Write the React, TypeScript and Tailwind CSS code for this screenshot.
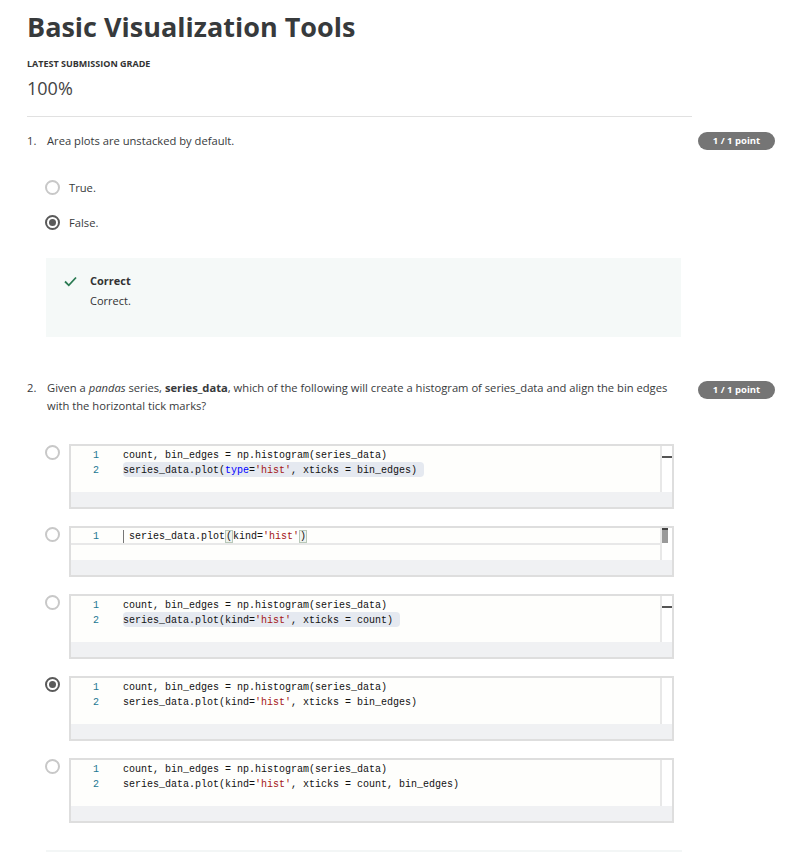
import React from "react";

const sans = { fontFamily: '"Open Sans", "Noto Sans", sans-serif' };
const mono = { fontFamily: '"Liberation Mono", "DejaVu Sans Mono", monospace' };

function Badge() {
  return (
    <div className="flex h-[18px] w-[77px] items-center justify-center rounded-full bg-[#757575] text-[9.5px] font-bold text-white">
      1 / 1 point
    </div>
  );
}

function Radio({ checked }: { checked?: boolean }) {
  return (
    <div
      className={
        "flex h-[15px] w-[15px] shrink-0 items-center justify-center rounded-full border-2 " +
        (checked ? "border-[#5a5a5a]" : "border-[#c8c8c8]")
      }
    >
      {checked && <div className="h-[7px] w-[7px] rounded-full bg-[#5a5a5a]" />}
    </div>
  );
}

type Tok = { t: string; c?: string };
type Line = { toks: Tok[]; hl?: number };

const S = (t: string): Tok => ({ t });
const R = (t: string): Tok => ({ t, c: "text-[#a31515]" });
const B = (t: string): Tok => ({ t, c: "text-[#0000ff]" });

const first: Line = { toks: [S("count, bin_edges = np.histogram(series_data)")] };

const options: { lines: Line[]; checked?: boolean; thumb?: "line" | "block" }[] = [
  {
    thumb: "line",
    lines: [first, { hl: 301, toks: [S("series_data.plot("), B("type"), S("="), R("'hist'"), S(", xticks = bin_edges)")] }],
  },
  { thumb: "block", lines: [] },
  {
    thumb: "line",
    lines: [first, { hl: 277, toks: [S("series_data.plot(kind="), R("'hist'"), S(", xticks = count)")] }],
  },
  {
    checked: true,
    lines: [first, { toks: [S("series_data.plot(kind="), R("'hist'"), S(", xticks = bin_edges)")] }],
  },
  {
    lines: [first, { toks: [S("series_data.plot(kind="), R("'hist'"), S(", xticks = count, bin_edges)")] }],
  },
];

function CodeBox({ lines, thumb, single }: { lines: Line[]; thumb?: "line" | "block"; single?: boolean }) {
  return (
    <div className="w-[605px] border-2 border-[#dedede] bg-[#f0f1f3]">
      <div className={"flex bg-[#fefefc] " + (single ? "h-[32px]" : "h-[46px]")}>
        <div className="flex-1 pt-[2px] text-[10px] text-[#111]" style={mono}>
          {single ? (
            <div className="flex h-[15px] items-center border-b-2 border-[#e8e8e8]">
              <span className="w-[28px] text-right text-[#237893]">1</span>
              <span className="ml-[24px] h-[13px] w-px bg-[#777]" />
              <span className="ml-[5px] whitespace-pre">
                series_data.plot
                <span className="border border-[#b8c8b8] bg-[#eef2ee]">(</span>
                kind=<span className="text-[#a31515]">'hist'</span>
                <span className="border border-[#b8c8b8] bg-[#eef2ee]">)</span>
              </span>
            </div>
          ) : (
            lines.map((ln, i) => (
              <div key={i} className="flex h-[15px] items-center">
                <span className="w-[28px] text-right text-[#237893]">{i + 1}</span>
                <span className="relative ml-[24px] whitespace-pre">
                  {ln.hl && (
                    <span
                      className="absolute left-0 top-[-1px] h-[15px] rounded-sm bg-[#e5e9f0]"
                      style={{ width: ln.hl }}
                    />
                  )}
                  <span className="relative">
                    {ln.toks.map((tk, j) => (
                      <span key={j} className={tk.c}>
                        {tk.t}
                      </span>
                    ))}
                  </span>
                </span>
              </div>
            ))
          )}
        </div>
        <div className="w-[12px] border-l-2 border-[#e8e8e8] bg-white">
          {thumb === "line" && <div className="mt-[10px] h-[2px] w-full bg-[#555]" />}
          {thumb === "block" && (
            <div className="h-[15px] w-[6px] border-t-2 border-[#444] bg-[#9a9a9a]" />
          )}
        </div>
      </div>
      <div className="h-[15px]" />
    </div>
  );
}

export default function App() {
  return (
    <div className="min-h-screen bg-white pl-[27px] text-[#373a3c]" style={sans}>
      <h1 className="pt-[9px] text-[27px] font-bold leading-[36px] text-[#373a3c]">
        Basic Visualization Tools
      </h1>
      <div className="mt-[13px] text-[9px] font-bold leading-[12px] text-[#333]">
        LATEST SUBMISSION GRADE
      </div>
      <div className="mt-[6px] text-[18px] font-normal leading-[24px] text-[#444]">100%</div>
      <div className="mt-[16px] h-px w-[665px] bg-[#e1e1e1]" />

      {/* question 1 */}
      <div className="mt-[15px] flex">
        <div className="flex w-[664px]">
          <span className="w-[20px] text-[11.2px] leading-[18px]">1.</span>
          <div className="flex-1">
            <p className="text-[11.2px] leading-[18px]">Area plots are unstacked by default.</p>
            <div className="mt-[30px] flex flex-col gap-[20px]">
              <label className="-ml-[2px] flex items-center gap-[9px] text-[11.2px] leading-[15px]">
                <Radio />
                True.
              </label>
              <label className="-ml-[2px] flex items-center gap-[9px] text-[11.2px] leading-[15px]">
                <Radio checked />
                False.
              </label>
            </div>
            <div className="-ml-[1px] mt-[28px] h-[79px] w-[635px] bg-[#f5f9f8] pl-[18px] pt-[15px]">
              <div className="flex items-center">
                <svg width="13" height="11" viewBox="0 0 13 11" className="mr-[13px]">
                  <path d="M1 5.5 L4.8 9.3 L12 1.5" fill="none" stroke="#2a7a52" strokeWidth="1.8" />
                </svg>
                <span className="text-[11px] font-bold leading-[16px] text-[#333]">Correct</span>
              </div>
              <div className="ml-[26px] mt-[4px] text-[11px] leading-[16px] text-[#333]">Correct.</div>
            </div>
          </div>
        </div>
        <div className="ml-[7px]">
          <Badge />
        </div>
      </div>

      {/* question 2 */}
      <div className="mt-[42px] flex">
        <div className="flex w-[664px]">
          <span className="w-[20px] text-[11.2px] leading-[18px]">2.</span>
          <div className="flex-1">
            <p className="w-[632px] text-[11.2px] leading-[18px]">
              Given a <em>pandas</em> series, <strong>series_data</strong>, which of the following will create a
              histogram of series_data and align the bin edges with the horizontal tick marks?
            </p>
            <div className="mt-[29px] flex flex-col gap-[17px]">
              {options.map((o, i) => (
                <div key={i} className="-ml-[2px] flex items-start gap-[9px]">
                  <div className="pt-[1px]">
                    <Radio checked={o.checked} />
                  </div>
                  <CodeBox lines={o.lines} thumb={o.thumb} single={i === 1} />
                </div>
              ))}
            </div>
            <div className="-ml-[1px] mt-[27px] h-[2px] w-[636px] bg-[#f3f6f6]" />
          </div>
        </div>
        <div className="ml-[7px] mt-[2px]">
          <Badge />
        </div>
      </div>
    </div>
  );
}
